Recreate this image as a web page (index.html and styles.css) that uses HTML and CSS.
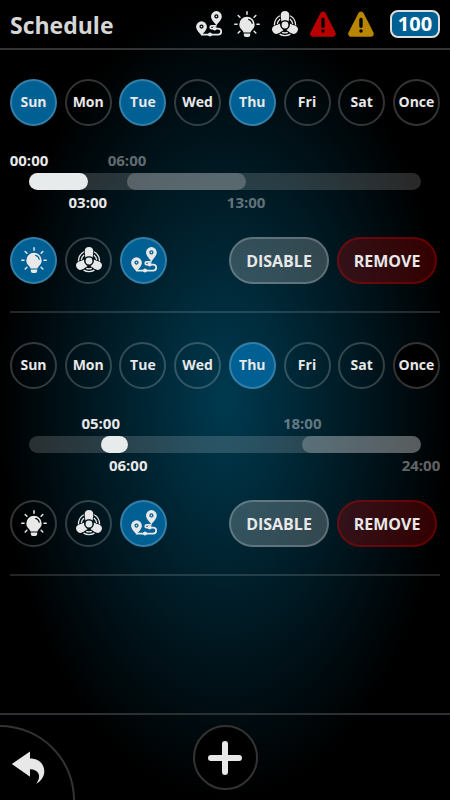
FILE: index.html
```html
<!DOCTYPE html>
<html lang="en">
<head>
<meta charset="utf-8">
<meta name="viewport" content="width=device-width, initial-scale=1">
<title>Schedule</title>
<link rel="stylesheet" href="styles.css">
</head>
<body>
<svg class="sprite" aria-hidden="true">
  <symbol id="route" viewBox="0 0 26 26">
    <path d="M20.5 14.8H15.6a1.4 1.4 0 0 0 0 2.8H22.2a3 3 0 0 1 0 6H5.5" fill="none" stroke="currentColor" stroke-width="1.7"/>
    <circle cx="18.6" cy="17.6" r="2"/><circle cx="14" cy="23.6" r="2"/>
    <path fill-rule="evenodd" d="M20.4 14.6C19 12 15 9 15 5.5a5.4 5.4 0 0 1 10.8 0C25.8 9 21.8 12 20.4 14.6ZM20.4 3.3a2.1 2.1 0 1 0 0 4.2a2.1 2.1 0 1 0 0-4.2Z"/>
    <path fill-rule="evenodd" d="M5.5 24.8C4.1 22.2 .1 19.2 .1 15.7a5.4 5.4 0 0 1 10.8 0C10.9 19.2 6.9 22.2 5.5 24.8ZM5.5 13.5a2.1 2.1 0 1 0 0 4.2a2.1 2.1 0 1 0 0-4.2Z"/>
    <circle cx="20.4" cy="5.4" r=".8"/><circle cx="5.5" cy="15.6" r=".8"/>
  </symbol>
  <symbol id="bulb" viewBox="0 0 26 26">
    <path fill-rule="evenodd" d="M13 5.8a7.7 7.7 0 0 0-7.7 7.7c0 3.4 2 4.8 3.3 6.2.6.7.8 1.3.9 1.7h7c.1-.4.3-1 .9-1.7 1.3-1.4 3.3-2.8 3.3-6.2A7.7 7.7 0 0 0 13 5.8ZM14.2 7.8c2.7.4 4.4 2.2 4.7 4.9h-1.2c-.3-2-1.5-3.4-3.5-3.8Z"/>
    <path d="M9.8 22.4h6.4v1.6a2 2 0 0 1-2 2h-2.4a2 2 0 0 1-2-2Z"/>
    <path d="M13 .8v2.4M.8 13.3h2.2M23 13.3h2.2M4.2 4.5l1.7 1.7M21.8 4.5l-1.7 1.7M4.2 22l1.7-1.7M21.800 22l-1.700-1.700" fill="none" stroke="currentColor" stroke-width="1.5" stroke-linecap="round"/>
  </symbol>
  <symbol id="fan" viewBox="0 0 26 26">
    <path id="blade" d="M13 0c-3 0-4.300 1.900-4.300 4.300 0 2.200.5 3.800.6 6.200 1-.8 2.300-1.300 3.700-1.300s2.700.5 3.700 1.300c.1-2.400.6-4 .6-6.200C17.300 1.900 16 0 13 0Z"/>
    <use href="#blade" transform="rotate(118 13 14)"/>
    <use href="#blade" transform="rotate(242 13 14)"/>
    <circle cx="13" cy="14" r="3.400"/>
    <g fill="none" stroke="currentColor" stroke-width="1.300">
      <circle cx="13" cy="14" r="10.600" pathLength="360" stroke-dasharray="62 58" stroke-dashoffset="-59"/>
      <circle cx="13" cy="14" r="7.800" pathLength="360" stroke-dasharray="42 78" stroke-dashoffset="-69"/>
    </g>
  </symbol>
  <symbol id="warning" viewBox="0 0 26 26">
    <path d="M13 3.700 3.200 22.800H22.800Z" stroke="currentColor" stroke-width="6" stroke-linejoin="round"/>
    <path d="M13 8.500v6.800M13 20v.1" stroke="#000" stroke-width="3.400" stroke-linecap="round"/>
  </symbol>
</svg>

<header class="topbar">
  <h1 class="title">Schedule</h1>
  <div class="status">
    <svg class="icon"><use href="#route"/></svg>
    <svg class="icon"><use href="#bulb"/></svg>
    <svg class="icon"><use href="#fan"/></svg>
    <svg class="icon error"><use href="#warning"/></svg>
    <svg class="icon caution"><use href="#warning"/></svg>
  </div>
  <span class="badge">100</span>
</header>

<main class="list">
  <section class="schedule">
    <div class="days">
      <button class="round on" aria-pressed="true">Sun</button>
      <button class="round" aria-pressed="false">Mon</button>
      <button class="round on" aria-pressed="true">Tue</button>
      <button class="round" aria-pressed="false">Wed</button>
      <button class="round on" aria-pressed="true">Thu</button>
      <button class="round" aria-pressed="false">Fri</button>
      <button class="round" aria-pressed="false">Sat</button>
      <button class="round once" aria-pressed="false">Once</button>
    </div>
    <div class="timeline">
      <div class="span" style="left:0%;width:15%"><span class="from">00:00</span><span class="to">03:00</span></div>
      <div class="span dim" style="left:25%;width:30.4%"><span class="from">06:00</span><span class="to">13:00</span></div>
    </div>
    <div class="controls">
      <button class="round on" aria-label="Light" aria-pressed="true"><svg class="icon"><use href="#bulb"/></svg></button>
      <button class="round" aria-label="Fan" aria-pressed="false"><svg class="icon"><use href="#fan"/></svg></button>
      <button class="round on" aria-label="Route" aria-pressed="true"><svg class="icon"><use href="#route"/></svg></button>
      <div class="actions">
        <button class="pill">DISABLE</button>
        <button class="pill remove">REMOVE</button>
      </div>
    </div>
  </section>

  <section class="schedule">
    <div class="days">
      <button class="round" aria-pressed="false">Sun</button>
      <button class="round" aria-pressed="false">Mon</button>
      <button class="round" aria-pressed="false">Tue</button>
      <button class="round" aria-pressed="false">Wed</button>
      <button class="round on" aria-pressed="true">Thu</button>
      <button class="round" aria-pressed="false">Fri</button>
      <button class="round" aria-pressed="false">Sat</button>
      <button class="round once" aria-pressed="false">Once</button>
    </div>
    <div class="timeline">
      <div class="span" style="left:18.3%;width:7%"><span class="from">05:00</span><span class="to">06:00</span></div>
      <div class="span dim" style="left:69.7%;width:30.3%"><span class="from">18:00</span><span class="to">24:00</span></div>
    </div>
    <div class="controls">
      <button class="round" aria-label="Light" aria-pressed="false"><svg class="icon"><use href="#bulb"/></svg></button>
      <button class="round" aria-label="Fan" aria-pressed="false"><svg class="icon"><use href="#fan"/></svg></button>
      <button class="round on" aria-label="Route" aria-pressed="true"><svg class="icon"><use href="#route"/></svg></button>
      <div class="actions">
        <button class="pill">DISABLE</button>
        <button class="pill remove">REMOVE</button>
      </div>
    </div>
  </section>
</main>

<footer class="bottombar">
  <button class="back" aria-label="Back">
    <svg class="arrow" viewBox="0 0 34 34"><path d="M.8 14 19 1.400V8.500C28 8.500 33.300 14 33.300 21.500c0 5-3.300 9.500-8 12.300 2.700-4 3.400-7.300 2.200-10-1.300-3-4.300-4.600-8.500-4.600v7.500Z"/></svg>
  </button>
  <button class="add" aria-label="Add schedule">
    <svg class="plus" viewBox="0 0 34 34"><path d="M17 3v28M3 17h28"/></svg>
  </button>
</footer>
</body>
</html>
```
FILE: styles.css
```css
* {
  box-sizing: border-box;
}

body {
  margin: 0;
  min-height: 100vh;
  display: flex;
  flex-direction: column;
  background: radial-gradient(closest-side, #003a50, #000) #000;
  color: #e8e8e8;
  font: bold 15px/20px "Open Sans", "Noto Sans", sans-serif;
}

button {
  padding: 0;
  color: inherit;
  font: inherit;
  cursor: pointer;
}

.sprite {
  position: absolute;
  width: 0;
  height: 0;
}

.icon {
  display: block;
  width: 26px;
  height: 26px;
  fill: currentColor;
}

.topbar {
  display: flex;
  align-items: center;
  height: 50px;
  padding: 0 10px;
  border-bottom: 2px solid #333;
}

.title {
  flex: 1;
  margin: 0;
  padding-top: 2px;
  color: #d6d6d6;
  font-size: 23px;
  line-height: 32px;
}

.status {
  display: flex;
  gap: 12px;
  margin-right: 16px;
}

.error {
  color: #b80000;
}

.caution {
  color: #b88600;
}

.badge {
  width: 50px;
  border: 2px solid #ddd;
  border-radius: 8px;
  background: #005f93;
  color: #fff;
  font-size: 20px;
  line-height: 24px;
  text-align: center;
}

.list {
  flex: 1;
  padding: 0 10px;
}

.schedule {
  padding: 29px 0 27px;
  border-bottom: 2px solid rgba(255, 255, 255, 0.14);
}

.days {
  display: flex;
  justify-content: space-between;
  font-size: 14px;
}

.round {
  display: grid;
  place-items: center;
  width: 47px;
  height: 47px;
  padding-bottom: 2px;
  border: 2px solid rgba(255, 255, 255, 0.2);
  border-radius: 50%;
  background: transparent;
  white-space: nowrap;
}

.once {
  background: #000;
}

.on {
  background: #005f93;
}

.timeline {
  position: relative;
  height: 17px;
  margin: 47px 19px;
  border-radius: 9px;
  background: rgba(255, 255, 255, 0.16);
}

.span {
  position: absolute;
  height: 17px;
  border-radius: 9px;
  background: #e8ebeb;
}

.dim {
  background: rgba(255, 255, 255, 0.22);
  color: rgba(255, 255, 255, 0.4);
}

.from,
.to {
  position: absolute;
}

.from {
  bottom: 20px;
  left: 0;
  transform: translateX(-50%);
}

.to {
  top: 19px;
  right: 0;
  transform: translateX(50%);
}

.controls {
  display: flex;
  gap: 8px;
}

.actions {
  display: flex;
  gap: 8px;
  margin: 0 3px 0 auto;
}

.pill {
  width: 100px;
  border: 2px solid rgba(255, 255, 255, 0.22);
  border-radius: 24px;
  background: rgba(255, 255, 255, 0.2);
  font-size: 16px;
}

.remove {
  border-color: rgba(255, 0, 0, 0.25);
  background: rgba(255, 0, 0, 0.2);
}

.bottombar {
  display: grid;
  grid-template-columns: 1fr auto 1fr;
  align-items: end;
  height: 87px;
  border-top: 2px solid #2c3033;
}

.back {
  display: grid;
  place-items: end start;
  width: 75px;
  height: 75px;
  padding: 0 0 16px 11px;
  border: solid #333;
  border-width: 2px 2px 0 0;
  border-radius: 0 75px 0 0;
  background: #000;
}

.arrow {
  width: 34px;
  height: 34px;
  fill: #e8e8e8;
}

.add {
  display: grid;
  place-items: center;
  width: 65px;
  height: 65px;
  margin-bottom: 10px;
  border: 2px solid #333;
  border-radius: 50%;
  background: #000;
}

.plus {
  width: 34px;
  height: 34px;
  stroke: #e8e8e8;
  stroke-width: 6px;
  stroke-linecap: round;
}
```
